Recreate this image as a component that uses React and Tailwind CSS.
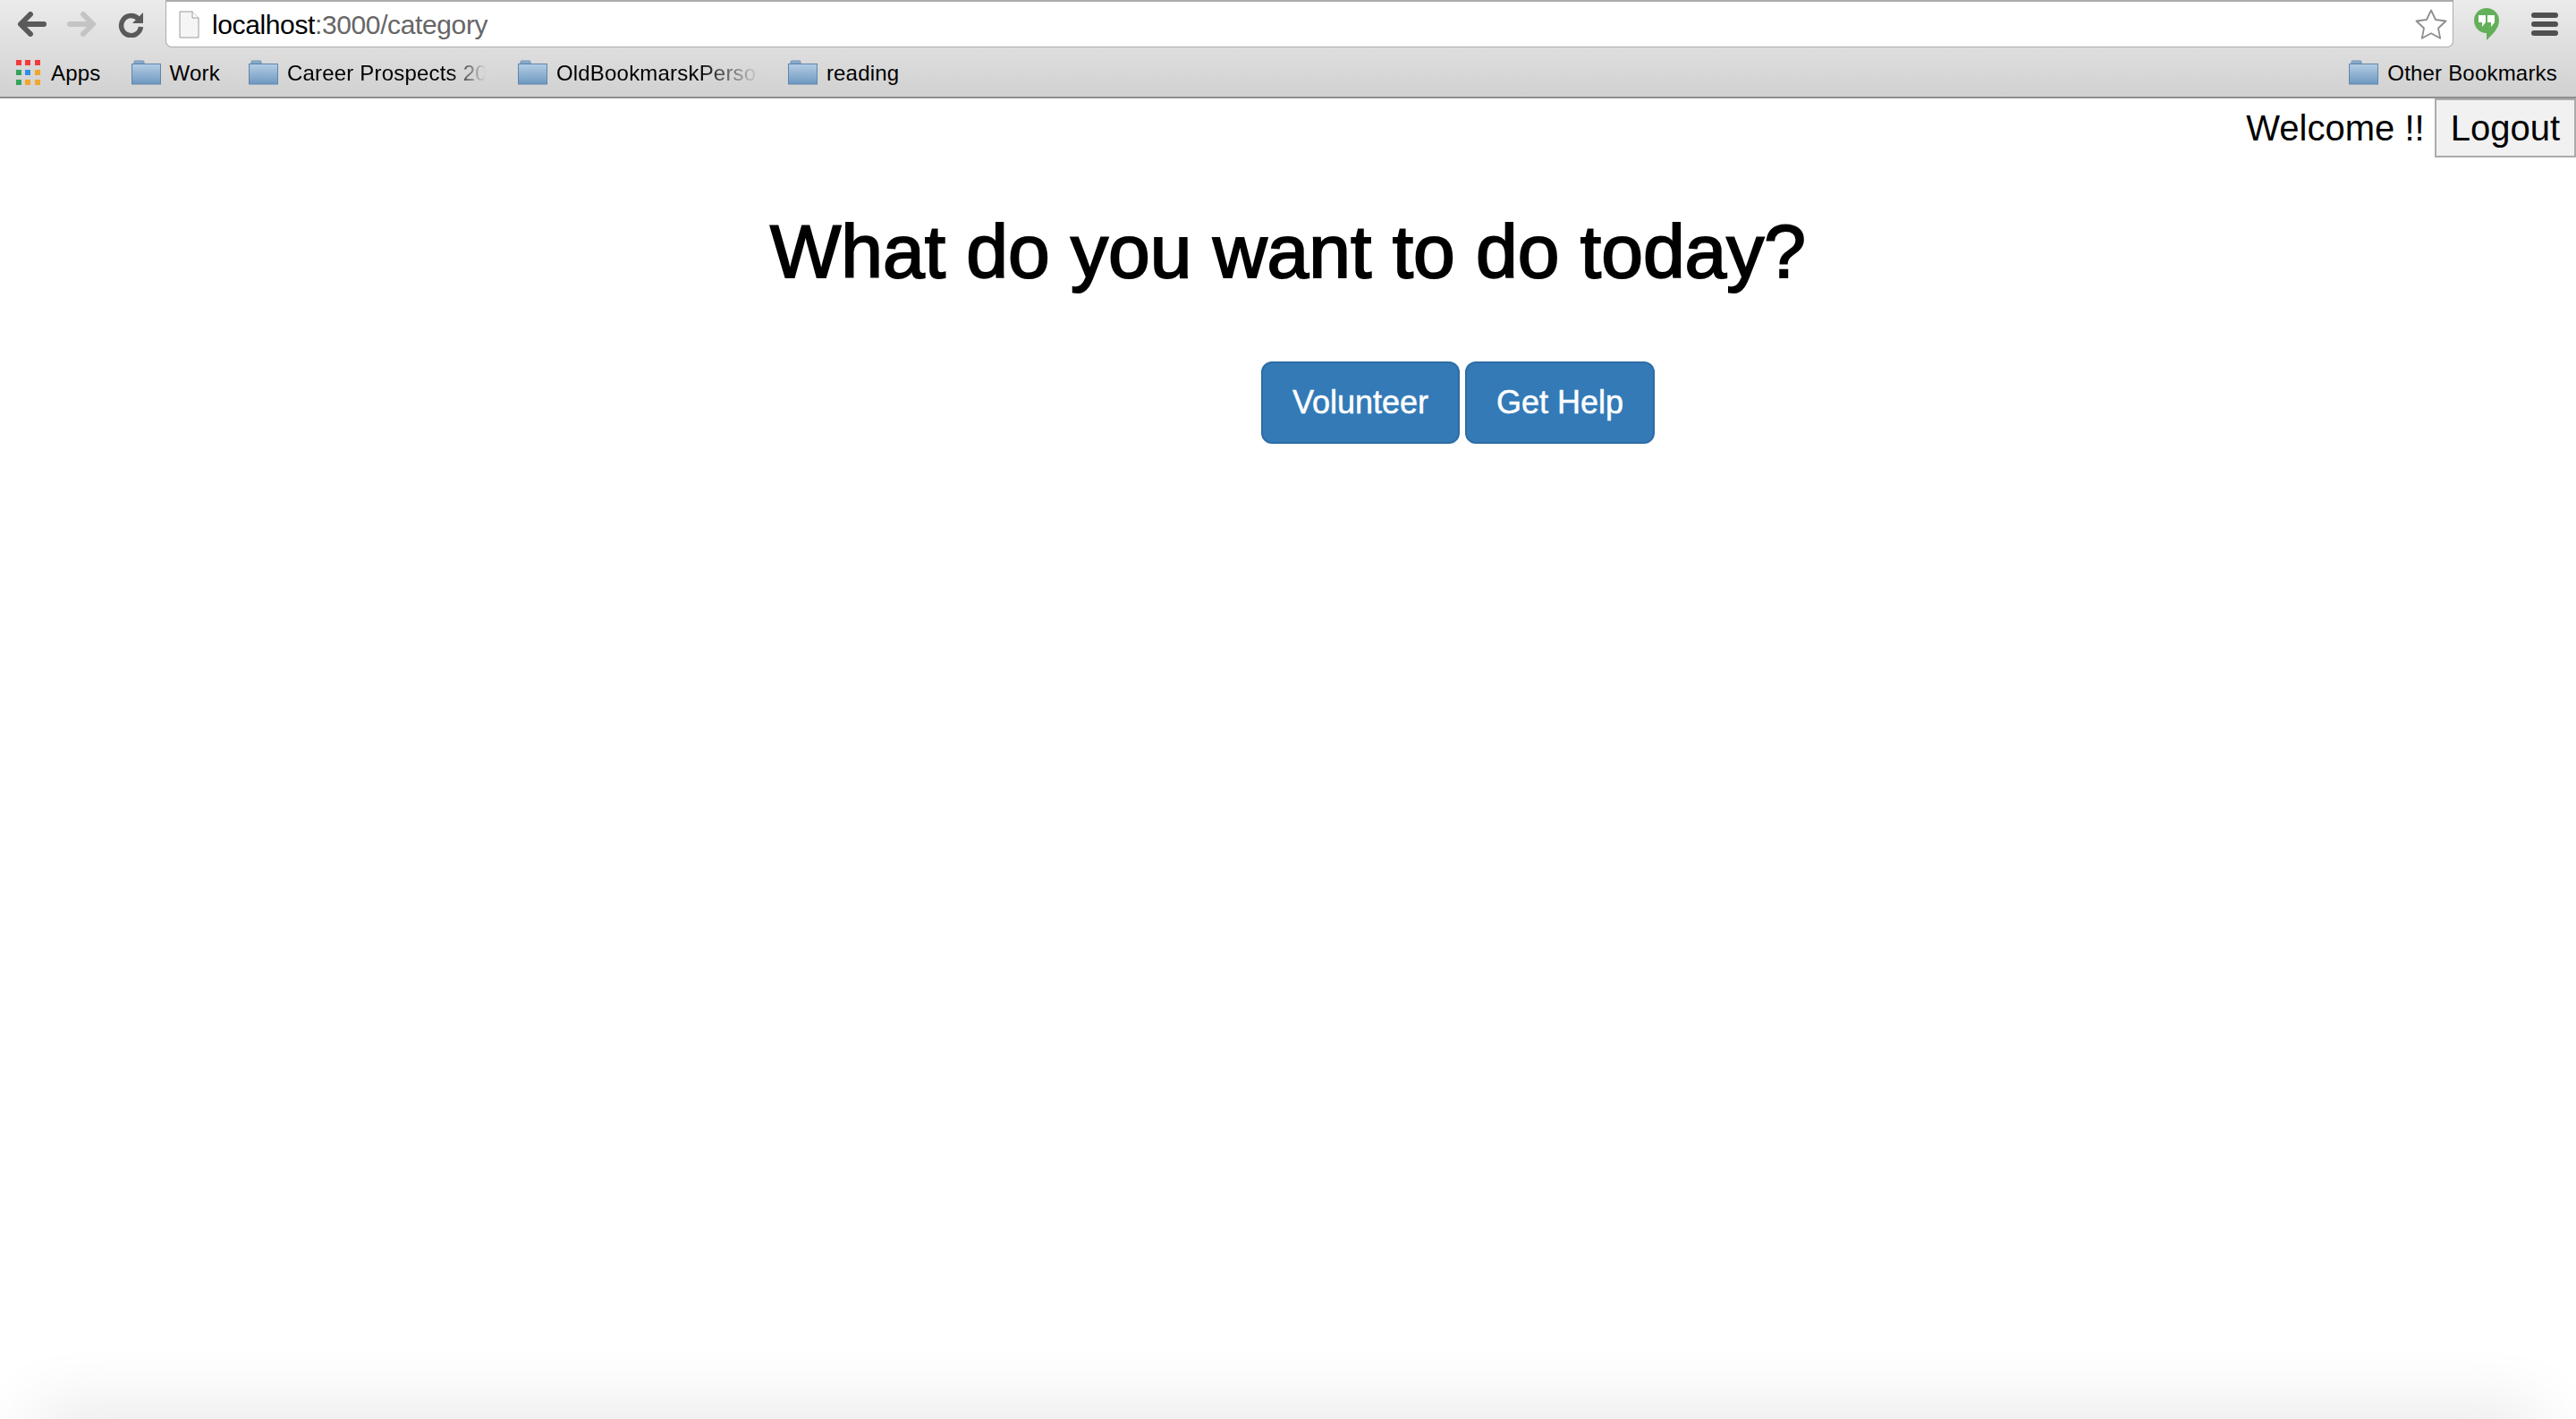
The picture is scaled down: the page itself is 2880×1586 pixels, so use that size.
import React from 'react';

const Folder = () => (
  <svg width="33" height="28" viewBox="0 0 33 28" className="shrink-0">
    <defs>
      <linearGradient id="folderFill" x1="0" y1="0" x2="0" y2="1">
        <stop offset="0" stopColor="#b5cde4" />
        <stop offset="1" stopColor="#6d98c1" />
      </linearGradient>
    </defs>
    <path d="M3 4V2a1 1 0 0 1 1-1h9a1 1 0 0 1 1 1v2z" fill="#8fb0d0" stroke="#6f93b5" />
    <rect x="0.5" y="4.5" width="32" height="22.5" fill="url(#folderFill)" stroke="#5f86ab" />
  </svg>
);

const AppsGrid = () => {
  const colors = ['#f33b3b', '#f33b3b', '#f33b3b', '#34a35c', '#2f8fe8', '#f3a52c', '#34a35c', '#f3a52c', '#f3a52c'];
  return (
    <div className="grid grid-cols-3 gap-[5px] w-[26px] shrink-0">
      {colors.map((c, i) => (
        <span key={i} className="w-[6px] h-[6px]" style={{ backgroundColor: c }} />
      ))}
    </div>
  );
};

const Bookmark = ({ label, className = '', textClass = '' }) => (
  <div className={`flex items-center gap-[10px] ${className}`}>
    <Folder />
    <span className={`text-[24px] leading-[30px] pt-[1px] tracking-[0.2px] text-black whitespace-nowrap ${textClass}`}>{label}</span>
  </div>
);

const Arrow = ({ color, flip }) => (
  <svg width="32" height="28" viewBox="0 0 32 28" className={flip ? '-scale-x-100' : ''}>
    <path d="M14 3 3 14l11 11M4 14h25" fill="none" stroke={color} strokeWidth="6" strokeLinecap="round" strokeLinejoin="round" />
  </svg>
);

export default function App() {
  return (
    <div className="relative h-[1586px] overflow-hidden bg-white font-['Liberation_Sans',sans-serif] text-black">
      {/* browser chrome */}
      <div className="h-[110px] bg-linear-to-b from-[#ebebeb] to-[#d1d1d1] border-b-2 border-[#8f8f8f]">
        <div className="flex items-center h-[54px] pr-[20px]">
          <div className="flex items-center pl-[20px] w-[185px] shrink-0">
            <Arrow color="#5a5a5a" />
            <div className="ml-[23px]"><Arrow color="#c4c4c4" flip /></div>
            <svg width="30" height="30" viewBox="0 0 30 30" className="ml-[25px]">
              <path d="M23 9.5A11 11 0 1 0 25.5 18" fill="none" stroke="#5a5a5a" strokeWidth="5.5" />
              <path d="M28 2v12H16z" fill="#5a5a5a" />
            </svg>
          </div>
          <div className="flex items-center flex-1 h-[53px] self-start bg-white border border-t-2 border-[#ababab] rounded-b-[7px] pl-[14px] pr-[5px]">
            <svg width="23" height="31" viewBox="0 0 23 31" className="shrink-0">
              <path d="M1 1h14l7 7v22H1z" fill="#f5f5f5" stroke="#9a9a9a" />
              <path d="M15 1v7h7" fill="#fff" stroke="#9a9a9a" />
            </svg>
            <span className="ml-[14px] text-[30px] tracking-[-0.38px] text-[#666]">
              <span className="text-black">localhost</span>:3000/category
            </span>
            <svg width="38" height="36" viewBox="0 0 38 36" className="ml-auto">
              <path d="M19 2.5l5 10.5 11.5 1.5-8.500 8 2.200 11.300L19 28.200 8.800 33.800 11 22.500l-8.500-8L14 13z" fill="#fff" stroke="#8e8e8e" strokeWidth="1.800" strokeLinejoin="round" />
            </svg>
          </div>
          <svg width="28" height="36" viewBox="0 0 28 36" className="ml-[23px] shrink-0">
            <path d="M14 0a14 14 0 0 1 14 14c0 9-8 16-14 22v-8A14 14 0 0 1 14 0z" fill="#64b05a" />
            <path d="M5 8h8v8l-4 5v-5H5zM15 8h8v8l-4 5v-5h-4z" fill="#fff" />
          </svg>
          <div className="ml-[36px] flex flex-col gap-[4px] shrink-0">
            <span className="w-[30px] h-[6px] rounded-full bg-[#505050]" />
            <span className="w-[30px] h-[6px] rounded-full bg-[#505050]" />
            <span className="w-[30px] h-[6px] rounded-full bg-[#505050]" />
          </div>
        </div>

        <div className="flex items-center h-[54px] pl-[18px] pr-[21px]">
          <AppsGrid />
          <span className="ml-[13px] text-[24px] leading-[30px] pt-[1px] tracking-[0.2px] whitespace-nowrap">Apps</span>
          <Bookmark label="Work" className="ml-[34px]" />
          <Bookmark label="Career Prospects 20" className="ml-[32px]" textClass="w-[222px] [mask-image:linear-gradient(to_right,black_82%,transparent)]" />
          <Bookmark label="OldBookmarskPerso" className="ml-[36px]" textClass="w-[228px] [mask-image:linear-gradient(to_right,black_70%,transparent)]" />
          <Bookmark label="reading" className="ml-[31px]" />
          <Bookmark label="Other Bookmarks" className="ml-auto" />
        </div>
      </div>

      {/* page */}
      <div className="flex justify-end items-center">
        <span className="text-[40px] mr-[11px]">Welcome !!</span>
        <button className="h-[66px] px-[16px] text-[40px] bg-[#f1f1f1] border-2 border-[#ababab]">Logout</button>
      </div>

      <h1 className="mt-[59px] text-center text-[84px] leading-[92px] font-normal [-webkit-text-stroke:2px_black]">
        What do you want to do today?
      </h1>

      <div className="flex gap-[6px] mt-[77px] ml-[1410px]">
        <button className="h-[92px] w-[222px] text-[36px] text-white bg-[#337ab7] border-2 border-[#2e6da4] rounded-[12px] [-webkit-text-stroke:0.5px_white]">Volunteer</button>
        <button className="h-[92px] w-[212px] text-[36px] text-white bg-[#337ab7] border-2 border-[#2e6da4] rounded-[12px] [-webkit-text-stroke:0.5px_white]">Get Help</button>
      </div>

      {/* window shadow at the bottom edge */}
      <div className="absolute left-[40px] right-[40px] -bottom-[40px] h-[40px] shadow-[0_0_80px_rgba(0,0,0,0.16)]" />
    </div>
  );
}
